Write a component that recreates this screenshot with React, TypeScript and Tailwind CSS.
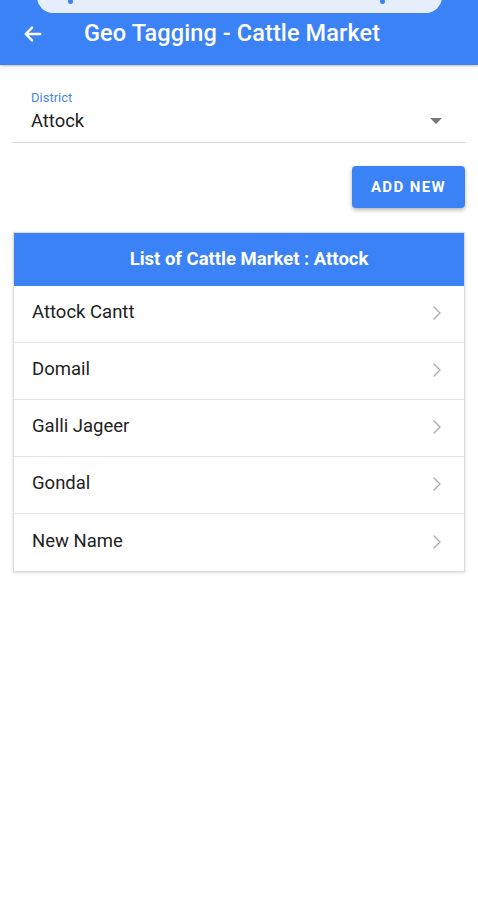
import React from "react";

const items = ["Attock Cantt", "Domail", "Galli Jageer", "Gondal", "New Name"];

export default function App() {
  return (
    <div className="w-[478px] h-[900px] bg-white" style={{ fontFamily: "Roboto, 'Noto Sans', sans-serif" }}>
      <div className="relative h-[65px] bg-[#3b82f6] flex items-center shadow-[0_1px_3px_rgba(0,0,0,0.25)]">
        <div className="absolute left-[37px] top-[-20px] w-[405px] h-[33px] rounded-[16px] bg-[#e6edfb]">
          <div className="absolute left-[31px] bottom-[9px] w-[5px] h-[5px] rounded-full bg-[#3b82f6]" />
          <div className="absolute left-[343px] bottom-[9px] w-[5px] h-[5px] rounded-full bg-[#3b82f6]" />
        </div>
        <div className="flex items-center pt-[2px]">
          <svg className="ml-[22px]" width="22" height="22" viewBox="0 0 24 24" fill="none" stroke="white" strokeWidth="2.6" strokeLinecap="round" strokeLinejoin="round">
            <path d="M20 12H4.5M11 5l-7 7 7 7" />
          </svg>
          <span className="ml-[40px] text-white text-[23.5px] font-medium tracking-[0.1px]">Geo Tagging - Cattle Market</span>
        </div>
      </div>

      <div className="mx-[12px] mt-[26px] border-b border-[#d9d9d9] pb-[9px]">
        <div className="pl-[19px] text-[13px] leading-[14px] text-[#4a86e8]">District</div>
        <div className="flex items-center justify-between pl-[19px] pr-[24px] mt-[4px]">
          <span className="text-[18.4px] leading-[24px] text-[#222]">Attock</span>
          <svg width="12" height="6" viewBox="0 0 12 6"><path d="M0 0h12L6 6z" fill="#777" /></svg>
        </div>
      </div>

      <div className="flex justify-end mt-[23px] mr-[13px]">
        <button className="w-[113px] h-[42px] rounded-[4px] bg-[#3b82f6] text-white text-[15px] font-bold tracking-[1.4px] shadow-[0_2px_4px_rgba(0,0,0,0.3)]">
          ADD NEW
        </button>
      </div>

      <div className="mx-[13px] mt-[24px] border border-[#dcdcdc] shadow-[0_1px_3px_rgba(0,0,0,0.15)]">
        <div className="h-[53px] bg-[#3b82f6] flex items-center justify-center pl-[20px] text-white text-[18.5px] font-bold">
          List of Cattle Market : Attock
        </div>
        {items.map((name, i) => (
          <div key={name} className={`h-[57px] flex items-center justify-between pl-[18px] pr-[22px] pb-[2px] ${i < items.length - 1 ? "border-b border-[#e3e3e3]" : ""}`}>
            <span className="text-[18.5px] text-[#222]">{name}</span>
            <svg width="10" height="16" viewBox="0 0 10 16" fill="none" stroke="#aaa" strokeWidth="1.3" strokeLinecap="round" strokeLinejoin="round">
              <path d="M2 2l6 6-6 6" />
            </svg>
          </div>
        ))}
      </div>
    </div>
  );
}
